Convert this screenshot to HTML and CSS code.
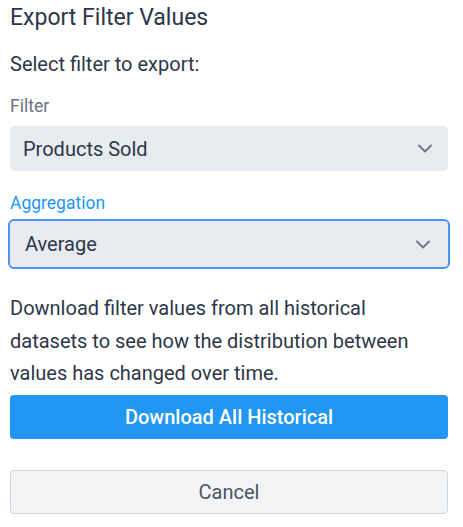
FILE: index.html
```html
<!DOCTYPE html>
<html lang="en">
<head>
  <meta charset="UTF-8">
  <meta name="viewport" content="width=device-width, initial-scale=1.0">
  <title>Export Filter Values</title>
  <link rel="stylesheet" href="styles.css">
</head>

<body>
  <div class="dialog">
    <h2 class="title">Export Filter Values</h2>
    <p class="intro">Select filter to export:</p>

    <label class="field-label">Filter</label>
    <div class="select">
      <span>Products Sold</span>
      <svg class="chevron" width="14" height="9" viewBox="0 0 14 9"><path d="M1 1.5 7 7.5 13 1.5" fill="none" stroke="#6b7280" stroke-width="1.8" stroke-linecap="round" stroke-linejoin="round"/></svg>
    </div>

    <label class="field-label active">Aggregation</label>
    <div class="select focused">
      <span>Average</span>
      <svg class="chevron" width="14" height="9" viewBox="0 0 14 9"><path d="M1 1.5 7 7.5 13 1.5" fill="none" stroke="#6b7280" stroke-width="1.8" stroke-linecap="round" stroke-linejoin="round"/></svg>
    </div>

    <p class="desc">Download filter values from all historical datasets to see how the distribution between values has changed over time.</p>

    <button class="btn primary">Download All Historical</button>
    <button class="btn secondary">Cancel</button>
  </div>
</body>
</html>
```

FILE: styles.css
```css
body {
  margin: 0;
  font-family: Roboto, "Liberation Sans", sans-serif;
  color: #2d3748;
  background: #fff;
}

.dialog {
  width: 438px;
  padding: 0 10px;
}

.title {
  margin: 0;
  padding-top: 3px;
  font-size: 23px;
  font-weight: 400;
  line-height: 30px;
}

.intro {
  margin: 19px 0 0;
  font-size: 20px;
  line-height: 24px;
}

.field-label {
  display: block;
  margin-top: 20px;
  font-size: 17.5px;
  line-height: 20px;
  color: #6b7280;
}

.field-label.active {
  margin-top: 22px;
  color: #2196f3;
}

.select {
  display: flex;
  align-items: center;
  justify-content: space-between;
  height: 45px;
  margin-top: 10px;
  padding: 0 16px 0 13px;
  background: #e8ebf0;
  border-radius: 5px;
  font-size: 20px;
  color: #2d3748;
  box-sizing: border-box;
}

.select.focused {
  height: 50px;
  margin: 6px -2px 0;
  padding: 0 18px 0 15px;
  border: 2px solid #4a94f5;
  border-radius: 6px;
}

.chevron {
  display: block;
}

.desc {
  margin: 23px 0 0;
  font-size: 20px;
  line-height: 32.5px;
}

.btn {
  display: block;
  width: 100%;
  height: 44px;
  border-radius: 4px;
  font-family: inherit;
  cursor: pointer;
}

.btn.primary {
  margin-top: 5.5px;
  border: none;
  background: #2196f3;
  color: #fff;
  font-size: 20px;
  font-weight: 500;
}

.btn.secondary {
  margin-top: 31px;
  border: 1px solid #cfd6e0;
  background: #f3f4f6;
  color: #4b5563;
  font-size: 20px;
}
```
